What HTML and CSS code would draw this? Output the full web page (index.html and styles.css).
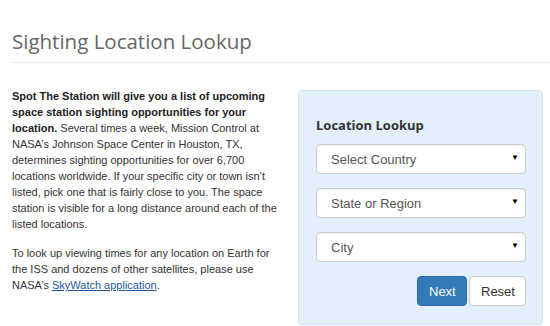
FILE: index.html
```html
<!DOCTYPE html>
<html lang="en">
<head>
<meta charset="utf-8">
<title>Sighting Location Lookup</title>
<link rel="stylesheet" href="styles.css">
</head>
<body>
<div class="page">
  <h1 class="title">Sighting Location Lookup</h1>
  <div class="row">
    <div class="intro">
      <p><strong>Spot The Station will give you a list of upcoming space station sighting opportunities for your location.</strong> Several times a week, Mission Control at NASA’s Johnson Space Center in Houston, TX, determines sighting opportunities for over 6,700 locations worldwide. If your specific city or town isn’t listed, pick one that is fairly close to you. The space station is visible for a long distance around each of the listed locations.</p>
      <p>To look up viewing times for any location on Earth for the ISS and dozens of other satellites, please use NASA’s <a href="#">SkyWatch application</a>.</p>
    </div>
    <form class="panel">
      <h2 class="panel-title">Location Lookup</h2>
      <div class="select"><select><option>Select Country</option></select></div>
      <div class="select"><select><option>State or Region</option></select></div>
      <div class="select"><select><option>City</option></select></div>
      <div class="actions">
        <button type="button" class="btn btn-primary">Next</button>
        <button type="button" class="btn btn-default">Reset</button>
      </div>
    </form>
  </div>
</div>
</body>
</html>
```
FILE: styles.css
```css
* { box-sizing: border-box; }
html, body { margin: 0; padding: 0; background: #fff; }
body {
  font-family: "Liberation Sans", Arial, sans-serif;
  font-size: 11px;
  color: #333;
}
.page { padding: 0 0 0 11px; }
.title {
  margin: 0;
  padding: 27px 0 7px 1px;
  font-family: "Open Sans", "DejaVu Sans", sans-serif;
  font-weight: 400;
  font-size: 20.5px;
  line-height: 28px;
  color: #666;
  border-bottom: 1px solid #eee;
}
.row {
  display: flex;
  align-items: flex-start;
  margin-top: 27px;
}
.intro {
  flex: none;
  width: 273px;
  margin-top: -2px;
  padding: 0 0 0 1px;
  margin-right: 14px;
  line-height: 16px;
}
.intro p { margin: 0 0 13px; }
.intro strong { color: #222; }
.intro a { color: #1e5a96; text-decoration: underline; }
.panel {
  flex: none;
  width: 245px;
  height: 235px;
  background: #e3f0fc;
  border: 1px solid #d5e5f3;
  border-radius: 4px;
  padding: 26px 16px 0 17px;
}
.panel-title {
  margin: 0 0 10px;
  font-family: "Open Sans", "DejaVu Sans", sans-serif;
  font-weight: 700;
  font-size: 13px;
  line-height: 17px;
  color: #333;
}
.select {
  position: relative;
  height: 30px;
  margin-bottom: 14px;
}
.select select {
  appearance: none;
  -webkit-appearance: none;
  width: 100%;
  height: 30px;
  padding: 0 20px 0 14px;
  font-family: "Liberation Sans", Arial, sans-serif;
  font-size: 13px;
  color: #555;
  background: #fff;
  border: 1px solid #ccc;
  border-radius: 4px;
  box-shadow: inset 0 1px 1px rgba(0,0,0,.075);
}
.select::after {
  content: "▼";
  position: absolute;
  right: 7px;
  top: 9px;
  font-size: 8px;
  line-height: 10px;
  color: #000;
  pointer-events: none;
}
.actions {
  display: flex;
  justify-content: flex-end;
  gap: 2px;
}
.btn {
  height: 30px;
  padding: 0 11px;
  font-family: "Liberation Sans", Arial, sans-serif;
  font-size: 13px;
  border-radius: 4px;
  border: 1px solid #ccc;
}
.btn-primary {
  width: 50px;
  background: #337ab7;
  border-color: #2e6da4;
  color: #fff;
}
.btn-default {
  width: 57px;
  background: #fff;
  color: #333;
}
```
